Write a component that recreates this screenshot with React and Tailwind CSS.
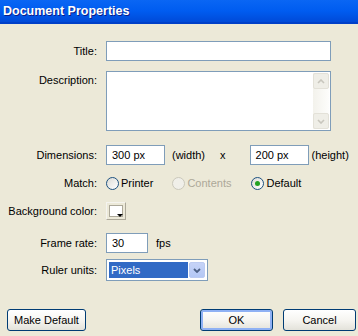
import React from "react";

const font = { fontFamily: '"Liberation Sans", Arial, sans-serif' };

function Label({ children, top }) {
  return (
    <div className={`w-[97px] mr-[9px] shrink-0 text-right text-[11px] text-black leading-none ${top ? "self-start pt-[4px]" : ""}`}>
      {children}
    </div>
  );
}

function Input({ w, value }) {
  return (
    <div className={`${w} h-[20px] border border-[#7f9db9] bg-white flex items-center pl-[5px] text-[11px] text-black`}>
      {value}
    </div>
  );
}

function Radio({ checked, disabled }) {
  return (
    <div
      className={`w-[13px] h-[13px] rounded-full border flex items-center justify-center ${
        disabled ? "border-[#cac8bb] bg-[#f0efe9]" : "border-[#1c5180] bg-gradient-to-br from-[#dcdcd6] to-white"
      }`}
    >
      {checked && <div className="w-[5px] h-[5px] rounded-full bg-[#21a121]" />}
    </div>
  );
}

function Button({ children, w, focus }) {
  return (
    <div
      className={`${w} h-[22px] rounded-[3px] border border-[#003c74] bg-gradient-to-b from-white via-[#f6f5f1] to-[#e3e2da] flex items-center justify-center text-[11px] text-black ${
        focus ? "shadow-[inset_0_0_0_2px_#8fb1f4]" : ""
      }`}
    >
      {children}
    </div>
  );
}

export default function App() {
  return (
    <div className="w-[358px] h-[336px] bg-[#ece9d8] flex flex-col" style={font}>
      <div className="h-[24px] bg-gradient-to-b from-[#0a66f4] via-[#005cf0] to-[#004ad8] border-b-2 border-[#0040c8] flex items-center pl-[3px]">
        <span className="text-white font-bold text-[12.5px] [text-shadow:1px_1px_0_#0a1e8a]">Document Properties</span>
      </div>

      <div className="flex items-center mt-[17px] h-[20px]">
        <Label>Title:</Label>
        <Input w="w-[225px]" value="" />
      </div>

      <div className="flex mt-[10px] h-[60px]">
        <Label top>Description:</Label>
        <div className="w-[225px] h-[60px] border border-[#7f9db9] bg-white flex justify-end p-[1px]">
          <div className="w-[16px] h-full bg-gradient-to-r from-[#f3f2ec] to-[#fdfdfb] flex flex-col justify-between">
            <div className="h-[16px] w-[16px] rounded-[2px] border border-[#e3e1d8] bg-[#efeee7] flex items-center justify-center">
              <svg width="8" height="5" viewBox="0 0 8 5"><path d="M1 4 L4 1 L7 4" stroke="#c8c6bd" strokeWidth="1.6" fill="none" /></svg>
            </div>
            <div className="h-[16px] w-[16px] rounded-[2px] border border-[#e3e1d8] bg-[#efeee7] flex items-center justify-center">
              <svg width="8" height="5" viewBox="0 0 8 5"><path d="M1 1 L4 4 L7 1" stroke="#c8c6bd" strokeWidth="1.6" fill="none" /></svg>
            </div>
          </div>
        </div>
      </div>

      <div className="flex items-center mt-[14px] h-[20px] text-[11px]">
        <Label>Dimensions:</Label>
        <Input w="w-[59px]" value="300 px" />
        <span className="ml-[7px]">(width)</span>
        <span className="ml-[15px]">x</span>
        <div className="ml-[24px]">
          <Input w="w-[59px]" value="200 px" />
        </div>
        <span className="ml-[3px]">(height)</span>
      </div>

      <div className="flex items-center mt-[8px] h-[20px] text-[11px]">
        <Label>Match:</Label>
        <Radio />
        <span className="ml-[2px]">Printer</span>
        <div className="ml-[19px]"><Radio disabled /></div>
        <span className="ml-[2px] text-[#aca899]">Contents</span>
        <div className="ml-[20px]"><Radio checked /></div>
        <span className="ml-[2px]">Default</span>
      </div>

      <div className="flex items-center mt-[9px] h-[18px]">
        <Label>Background color:</Label>
        <div className="relative w-[20px] h-[18px] border border-t-[#f5f4ef] border-l-[#f5f4ef] border-r-[#aca899] border-b-[#aca899] bg-[#ece9d8] p-[2px]">
          <div className="w-full h-full bg-white border border-[#aca899]" />
          <div className="absolute right-[2px] bottom-[2px] w-0 h-0 border-l-[3px] border-r-[3px] border-t-[3px] border-l-transparent border-r-transparent border-t-black" />
        </div>
      </div>

      <div className="flex items-center mt-[13px] h-[20px] text-[11px]">
        <Label>Frame rate:</Label>
        <Input w="w-[42px]" value="30" />
        <span className="ml-[8px]">fps</span>
      </div>

      <div className="flex items-center mt-[6px] h-[22px]">
        <Label>Ruler units:</Label>
        <div className="w-[102px] h-[22px] border border-[#7f9db9] bg-white flex items-center p-[2px]">
          <div className="flex-1 h-full bg-[#316ac5] text-white text-[11px] flex items-center pl-[2px]">Pixels</div>
          <div className="w-[16px] h-full ml-[1px] rounded-[2px] bg-gradient-to-b from-[#c6d3f7] to-[#b4c8f5] border border-[#bccbf1] flex items-center justify-center">
            <svg width="8" height="5" viewBox="0 0 8 5"><path d="M1 1 L4 4 L7 1" stroke="#4d6185" strokeWidth="1.8" fill="none" /></svg>
          </div>
        </div>
      </div>

      <div className="flex items-center mt-[28px] h-[22px] pl-[7px] pr-[2px]">
        <Button w="w-[79px]">Make Default</Button>
        <div className="flex-1" />
        <Button w="w-[73px]" focus>OK</Button>
        <div className="w-[10px]" />
        <Button w="w-[73px]">Cancel</Button>
      </div>
    </div>
  );
}
